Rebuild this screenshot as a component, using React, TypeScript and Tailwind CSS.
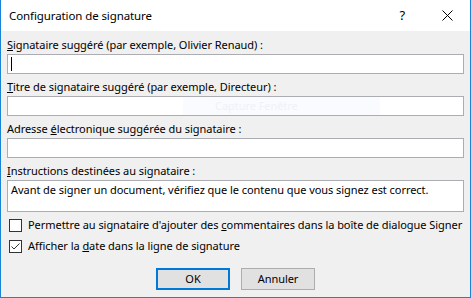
import React from "react";

const font = { fontFamily: '"Noto Sans", "Segoe UI", sans-serif' };

function Field({ label, children }: { label: React.ReactNode; children: React.ReactNode }) {
  return (
    <div className="mt-[5px] flex flex-col">
      <div className="h-[17px] leading-[16px]">{label}</div>
      {children}
    </div>
  );
}

function Box({ checked }: { checked?: boolean }) {
  return (
    <span className="flex h-[13px] w-[13px] shrink-0 items-center justify-center border border-[#333] bg-white">
      {checked && (
        <svg width="11" height="11" viewBox="0 0 11 11">
          <path d="M1.5 5.5 L4 8 L9.5 2.5" fill="none" stroke="#333" strokeWidth="1" />
        </svg>
      )}
    </span>
  );
}

export default function App() {
  return (
    <div
      style={font}
      className="flex h-[298px] w-[471px] flex-col border-x border-b border-[#1883d7] bg-[#f0f0f0] text-[11px] tracking-[-0.05px] text-black"
    >
      {/* title bar */}
      <div className="flex h-[31px] shrink-0 items-center bg-white pl-[8px]">
        <span className="flex-1 text-[11.5px] tracking-[-0.1px]">Configuration de signature</span>
        <span className="mr-[37px] text-[13px]">?</span>
        <svg width="11" height="11" viewBox="0 0 11 11" className="mr-[17px]">
          <path d="M0.5 0.5 L10.5 10.5 M10.5 0.5 L0.5 10.5" stroke="#000" strokeWidth="1" />
        </svg>
      </div>

      <div className="flex flex-1 flex-col px-[6px] pt-[1px]">
        <Field
          label={
            <>
              <u>S</u>ignataire suggéré (par exemple, Olivier Renaud) :
            </>
          }
        >
          <div className="flex h-[20px] items-center border border-[#abadb3] bg-white pl-[3px]">
            <span className="h-[14px] w-px bg-black" />
          </div>
        </Field>

        <Field
          label={
            <>
              <u>T</u>itre de signataire suggéré (par exemple, Directeur) :
            </>
          }
        >
          <div className="flex h-[20px] border border-[#abadb3] bg-white pl-[175px]">
            <div className="flex w-[197px] items-center bg-[#fafbfe] pl-[32px] text-[#eef1f8]">
              <span className="whitespace-nowrap">Capture Fenêtre</span>
            </div>
          </div>
        </Field>

        <Field
          label={
            <>
              Adresse <u>é</u>lectronique suggérée du signataire :
            </>
          }
        >
          <div className="h-[20px] border border-[#abadb3] bg-white" />
        </Field>

        <Field
          label={
            <>
              <u>I</u>nstructions destinées au signataire :
            </>
          }
        >
          <div className="h-[32px] border border-[#abadb3] bg-white pl-[3px] pt-[1px] leading-[16px]">
            Avant de signer un document, vérifiez que le contenu que vous signez est correct.
          </div>
        </Field>

        <label className="mt-[7px] flex h-[13px] items-center gap-[6px] pl-[2px]">
          <Box />
          <span className="whitespace-nowrap">
            Permettre au signataire d'ajouter des <u>c</u>ommentaires dans la boîte de dialogue Signer
          </span>
        </label>
        <label className="mt-[8px] flex h-[13px] items-center gap-[6px] pl-[2px]">
          <Box checked />
          <span>
            Afficher la <u>d</u>ate dans la ligne de signature
          </span>
        </label>

        <div className="mt-[15px] flex justify-center gap-[11px]">
          <button className="h-[22px] w-[74px] border-2 border-[#0078d7] bg-[#e1e1e1]">OK</button>
          <button className="h-[22px] w-[74px] border border-[#adadad] bg-[#e1e1e1]">Annuler</button>
        </div>
      </div>
    </div>
  );
}
